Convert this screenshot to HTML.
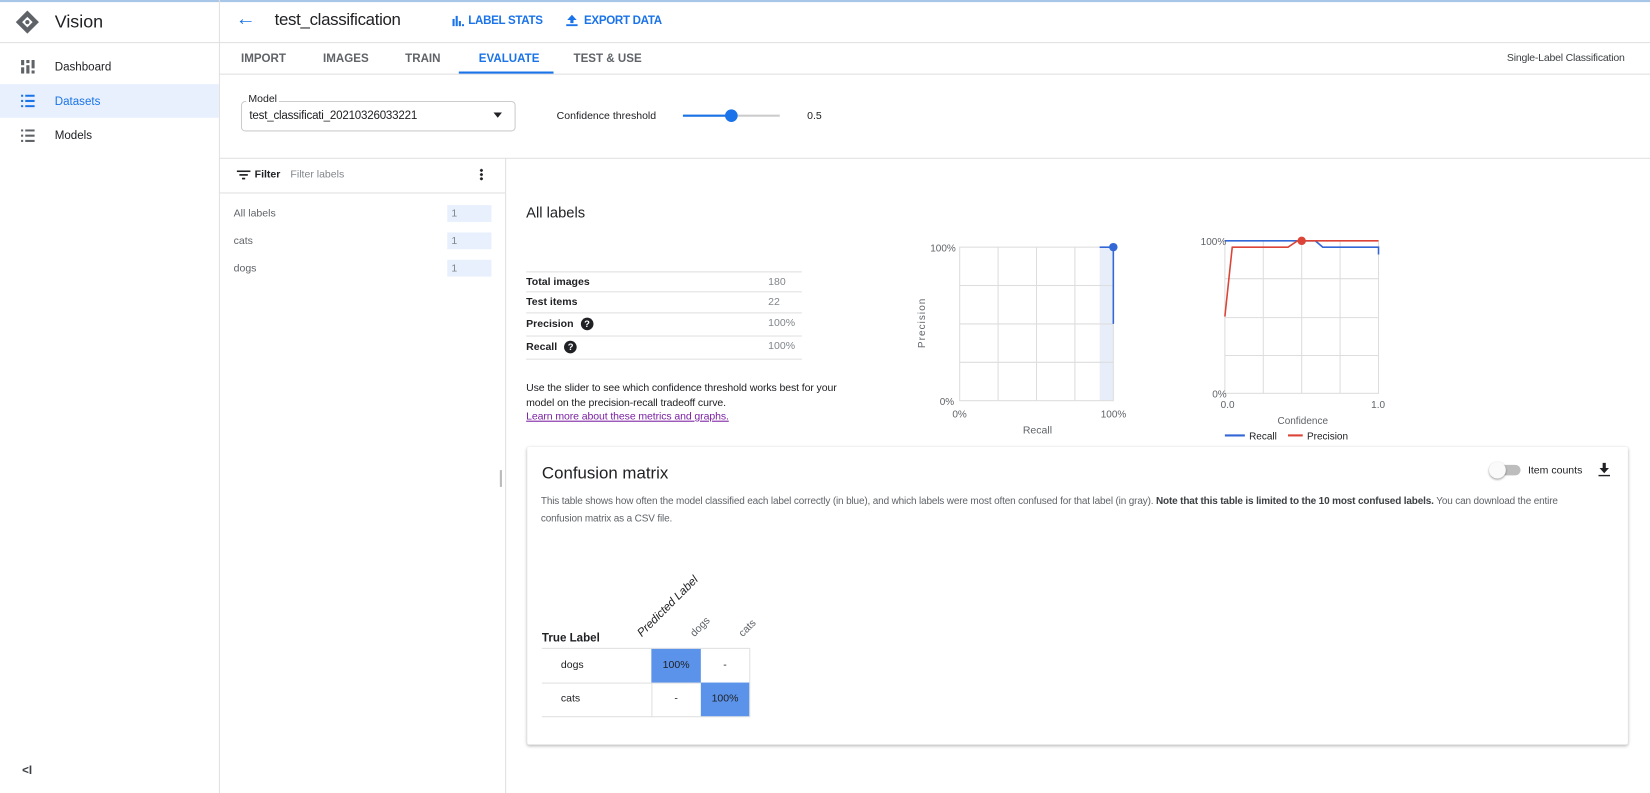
<!DOCTYPE html>
<html><head><meta charset="utf-8"><style>
*{box-sizing:border-box;margin:0;padding:0}
body{width:1650px;height:793px;overflow:hidden;background:#fff;font-family:"Liberation Sans",sans-serif;color:#202124}
#w{position:absolute;left:0;top:0;width:1568px;height:754px;transform:scale(1.05230,1.0517);transform-origin:0 0}
.a{position:absolute;white-space:nowrap}
.t{font-size:11px}
.line{position:absolute;background:#e0e0e0}
</style></head><body><div id="w">
<div class="a" style="left:0;top:0;width:1568px;height:2px;background:#a8c7e8"></div>
<div class="line" style="left:208px;top:0;width:1px;height:754px"></div>
<div class="line" style="left:0;top:40px;width:1568px;height:1px"></div>
<svg class="a" style="left:14px;top:9px" width="24" height="24" viewBox="0 0 24 24"><path d="M12 1L23 12 12 23 1 12Z" fill="#5f6368"/><path d="M12 7L17 12 12 17 7 12Z" fill="#fff"/><circle cx="12" cy="12" r="2" fill="#5f6368"/></svg>
<div class="a" style="left:52px;top:11px;font-size:17px">Vision</div>
<div class="a" style="left:0;top:80px;width:208px;height:32px;background:#e8f0fe"></div>
<svg class="a" style="left:20px;top:57px" width="13" height="13"><g fill="#5f6368"><rect x="0" y="0" width="3" height="5"/><rect x="0" y="7" width="3" height="6"/><rect x="5" y="0" width="3" height="3"/><rect x="5" y="5" width="3" height="8"/><rect x="10" y="0" width="3" height="8"/><rect x="10" y="10" width="3" height="3"/></g></svg>
<div class="a t" style="left:52px;top:58px">Dashboard</div>
<svg class="a" style="left:20px;top:90px" width="13" height="12"><g fill="#1a73e8"><rect x="0" y="0" width="2" height="2"/><rect x="0" y="5" width="2" height="2"/><rect x="0" y="10" width="2" height="2"/><rect x="4" y="0" width="9" height="2"/><rect x="4" y="5" width="9" height="2"/><rect x="4" y="10" width="9" height="2"/></g></svg>
<div class="a t" style="left:52px;top:91px;color:#1a73e8">Datasets</div>
<svg class="a" style="left:20px;top:123px" width="13" height="12"><g fill="#5f6368"><rect x="0" y="0" width="2" height="2"/><rect x="0" y="5" width="2" height="2"/><rect x="0" y="10" width="2" height="2"/><rect x="4" y="0" width="9" height="2"/><rect x="4" y="5" width="9" height="2"/><rect x="4" y="10" width="9" height="2"/></g></svg>
<div class="a t" style="left:52px;top:123px">Models</div>
<div class="a" style="left:21px;top:727px;font-size:11px;font-weight:bold;color:#3c4043">&lt;I</div>
<div class="a" style="left:224px;top:8px;font-size:19px;color:#1a73e8">←</div>
<div class="a" style="left:261px;top:11px;font-size:16px;letter-spacing:-0.3px">test_classification</div>
<svg class="a" style="left:430px;top:15px" width="11" height="10"><g fill="#1a73e8"><rect x="0" y="3" width="2" height="7"/><rect x="3" y="0" width="2" height="10"/><rect x="6" y="5" width="2" height="5"/><rect x="9" y="8" width="2" height="2"/></g></svg>
<div class="a" style="left:445px;top:14px;font-size:11px;font-weight:bold;color:#1a73e8;letter-spacing:-0.3px">LABEL STATS</div>
<svg class="a" style="left:538px;top:14px" width="11" height="11"><path d="M5.5 0L10 5H7V8H4V5H1Z M0 9H11V11H0Z" fill="#1a73e8"/></svg>
<div class="a" style="left:555px;top:14px;font-size:11px;font-weight:bold;color:#1a73e8;letter-spacing:-0.3px">EXPORT DATA</div>
<div class="line" style="left:208px;top:70px;width:1360px;height:1px"></div>
<div class="a" style="left:229px;top:50px;font-size:11px;font-weight:bold;color:#5f6368">IMPORT</div>
<div class="a" style="left:307px;top:50px;font-size:11px;font-weight:bold;color:#5f6368">IMAGES</div>
<div class="a" style="left:385px;top:50px;font-size:11px;font-weight:bold;color:#5f6368">TRAIN</div>
<div class="a" style="left:455px;top:50px;font-size:11px;font-weight:bold;color:#1a73e8">EVALUATE</div>
<div class="a" style="left:436px;top:68px;width:90px;height:2px;background:#1a73e8"></div>
<div class="a" style="left:545px;top:50px;font-size:11px;font-weight:bold;color:#5f6368">TEST &amp; USE</div>
<div class="a" style="left:1432px;top:50px;font-size:10px;color:#3c4043;letter-spacing:-0.2px">Single-Label Classification</div>
<div class="a" style="left:229px;top:96px;width:261px;height:29px;border:1px solid #ccc;border-radius:4px"></div>
<div class="a" style="left:234px;top:89px;font-size:10px;background:#fff;padding:0 2px">Model</div>
<div class="a" style="left:237px;top:104px;font-size:11px;letter-spacing:-0.2px">test_classificati_20210326033221</div>
<div class="a" style="left:469px;top:107px;width:0;height:0;border-left:4px solid transparent;border-right:4px solid transparent;border-top:5px solid #202124"></div>
<div class="a" style="left:529px;top:105px;font-size:10px">Confidence threshold</div>
<div class="a" style="left:649px;top:109px;width:92px;height:2px;background:#ccc"></div>
<div class="a" style="left:649px;top:109px;width:46px;height:2px;background:#1a73e8"></div>
<div class="a" style="left:689px;top:104px;width:12px;height:12px;border-radius:50%;background:#1a73e8"></div>
<div class="a" style="left:767px;top:105px;font-size:10px">0.5</div>
<div class="line" style="left:208px;top:150px;width:1360px;height:1px"></div>
<div class="line" style="left:480px;top:150px;width:1px;height:604px"></div>
<div class="line" style="left:208px;top:183px;width:272px;height:1px"></div>
<svg class="a" style="left:225px;top:162px" width="13" height="9"><g fill="#202124"><rect x="0" y="0" width="13" height="1.6"/><rect x="2.5" y="3.5" width="8" height="1.6"/><rect x="5" y="7" width="3" height="1.6"/></g></svg>
<div class="a" style="left:242px;top:161px;font-size:10px;font-weight:bold">Filter</div>
<div class="a" style="left:276px;top:161px;font-size:10px;color:#80868b">Filter labels</div>
<div class="a" style="left:456px;top:160px;width:3px;height:12px;background:radial-gradient(circle,#202124 1.3px,transparent 1.5px) 0 0/3px 4px"></div>
<div class="a" style="left:222px;top:198px;font-size:10px;color:#5f6368">All labels</div>
<div class="a" style="left:222px;top:224px;font-size:10px;color:#5f6368">cats</div>
<div class="a" style="left:222px;top:250px;font-size:10px;color:#5f6368">dogs</div>
<div class="a" style="left:425px;top:195px;width:42px;height:16px;background:#e8f0fe;font-size:10px;color:#80868b;padding:3px 4px">1</div>
<div class="a" style="left:425px;top:221px;width:42px;height:16px;background:#e8f0fe;font-size:10px;color:#80868b;padding:3px 4px">1</div>
<div class="a" style="left:425px;top:247px;width:42px;height:16px;background:#e8f0fe;font-size:10px;color:#80868b;padding:3px 4px">1</div>
<div class="a" style="left:475px;top:447px;width:2px;height:16px;background:#bbb"></div>
<div class="a" style="left:500px;top:194px;font-size:14px;font-weight:500">All labels</div>
<div class="line" style="left:500px;top:258px;width:262px;height:1px"></div>
<div class="line" style="left:500px;top:277px;width:262px;height:1px"></div>
<div class="line" style="left:500px;top:297px;width:262px;height:1px"></div>
<div class="line" style="left:500px;top:319px;width:262px;height:1px"></div>
<div class="line" style="left:500px;top:341px;width:262px;height:1px"></div>
<div class="a" style="left:500px;top:263px;font-size:10px;font-weight:bold">Total images</div><div class="a" style="left:730px;top:263px;font-size:10px;color:#80868b">180</div>
<div class="a" style="left:500px;top:282px;font-size:10px;font-weight:bold">Test items</div><div class="a" style="left:730px;top:282px;font-size:10px;color:#80868b">22</div>
<div class="a" style="left:500px;top:302px;font-size:10px;font-weight:bold">Precision <span style="display:inline-block;width:12px;height:12px;border-radius:50%;background:#202124;color:#fff;font-size:9px;text-align:center;line-height:12px;margin-left:4px">?</span></div><div class="a" style="left:730px;top:302px;font-size:10px;color:#80868b">100%</div>
<div class="a" style="left:500px;top:324px;font-size:10px;font-weight:bold">Recall <span style="display:inline-block;width:12px;height:12px;border-radius:50%;background:#202124;color:#fff;font-size:9px;text-align:center;line-height:12px;margin-left:4px">?</span></div><div class="a" style="left:730px;top:324px;font-size:10px;color:#80868b">100%</div>
<div class="a" style="left:500px;top:363px;font-size:10px;line-height:13.5px;white-space:normal;width:310px;letter-spacing:-0.1px">Use the slider to see which confidence threshold works best for your model on the precision-recall tradeoff curve.<br><span style="color:#7b1fa2;text-decoration:underline">Learn more about these metrics and graphs.</span></div>
<svg class="a" style="left:860px;top:225px" width="220" height="195">
<rect x="185" y="10" width="13" height="146" fill="#e8eef9"/>
<g stroke="#ddd" fill="none"><rect x="52" y="10" width="146" height="146"/><line x1="88.5" y1="10" x2="88.5" y2="156"/><line x1="125" y1="10" x2="125" y2="156"/><line x1="161.5" y1="10" x2="161.5" y2="156"/><line x1="52" y1="46.5" x2="198" y2="46.5"/><line x1="52" y1="83" x2="198" y2="83"/><line x1="52" y1="119.5" x2="198" y2="119.5"/></g>
<path d="M185 10H198V83" stroke="#3367d6" stroke-width="1.5" fill="none"/><circle cx="198" cy="10" r="4" fill="#3367d6"/>
<g font-size="9.5" fill="#5f6368" font-family="Liberation Sans"><text x="24" y="14">100%</text><text x="33" y="160">0%</text><text x="45" y="172">0%</text><text x="186" y="172">100%</text><text x="112" y="187" font-size="10">Recall</text><text transform="translate(19,106) rotate(-90)" letter-spacing="1">Precision</text></g>
</svg>
<svg class="a" style="left:1120px;top:215px" width="220" height="210">
<g stroke="#ddd" fill="none"><rect x="44" y="14" width="146" height="145"/><line x1="80.5" y1="14" x2="80.5" y2="159"/><line x1="117" y1="14" x2="117" y2="159"/><line x1="153.5" y1="14" x2="153.5" y2="159"/><line x1="44" y1="50" x2="190" y2="50"/><line x1="44" y1="87" x2="190" y2="87"/><line x1="44" y1="123" x2="190" y2="123"/></g>
<path d="M44 14H130L137 20H190V27" stroke="#3367d6" stroke-width="1.5" fill="none"/>
<path d="M44 86L51 20H104L113 14H190" stroke="#db4437" stroke-width="1.5" fill="none"/>
<circle cx="117" cy="14" r="4" fill="#db4437"/>
<g font-size="9.5" fill="#5f6368" font-family="Liberation Sans"><text x="21" y="18">100%</text><text x="32" y="163">0%</text><text x="40" y="173">0.0</text><text x="183" y="173">1.0</text><text x="94" y="188">Confidence</text><text x="67" y="203" fill="#202124">Recall</text><text x="122" y="203" fill="#202124">Precision</text></g>
<line x1="44" y1="199" x2="63" y2="199" stroke="#3367d6" stroke-width="2"/><line x1="104" y1="199" x2="118" y2="199" stroke="#db4437" stroke-width="2"/>
</svg>
<div class="a" style="left:501px;top:425px;width:1046px;height:283px;background:#fff;box-shadow:0 1px 3px rgba(0,0,0,.3);border-radius:2px"></div>
<div class="a" style="left:515px;top:442px;font-size:16px;font-weight:500">Confusion matrix</div>
<div class="a" style="left:1417px;top:442px;width:28px;height:10px;border-radius:5px;background:#bdbdbd"></div>
<div class="a" style="left:1415px;top:439px;width:16px;height:16px;border-radius:50%;background:#fafafa;box-shadow:0 1px 2px rgba(0,0,0,.4)"></div>
<div class="a" style="left:1452px;top:442px;font-size:10px">Item counts</div>
<svg class="a" style="left:1519px;top:440px" width="11" height="13"><path d="M4 0H7V5H10L5.5 10 1 5H4Z M0 11.5H11V13H0Z" fill="#202124"/></svg>
<div class="a" style="left:514px;top:468px;font-size:9.5px;line-height:17px;color:#5f6368;white-space:normal;width:998px;letter-spacing:-0.15px">This table shows how often the model classified each label correctly (in blue), and which labels were most often confused for that label (in gray). <b style="color:#3c4043">Note that this table is limited to the 10 most confused labels.</b> You can download the entire confusion matrix as a CSV file.</div>
<div class="a" style="left:515px;top:601px;font-size:11px;font-weight:bold">True Label</div>
<div class="a" style="left:612px;top:608px;font-size:11px;transform:rotate(-45deg);transform-origin:0 100%;font-style:italic;line-height:12px;margin-top:-12px">Predicted Label</div>
<div class="a" style="left:662px;top:608px;font-size:10px;color:#5f6368;transform:rotate(-45deg);transform-origin:0 100%;line-height:11px;margin-top:-11px">dogs</div>
<div class="a" style="left:708px;top:608px;font-size:10px;color:#5f6368;transform:rotate(-45deg);transform-origin:0 100%;line-height:11px;margin-top:-11px">cats</div>
<div class="line" style="left:515px;top:616px;width:197px;height:1px"></div>
<div class="line" style="left:515px;top:649px;width:197px;height:1px"></div>
<div class="line" style="left:515px;top:681px;width:197px;height:1px"></div>
<div class="line" style="left:619px;top:616px;width:1px;height:66px"></div>
<div class="line" style="left:712px;top:616px;width:1px;height:66px"></div>
<div class="a" style="left:619px;top:617px;width:47px;height:32px;background:#5b93ea;font-size:10px;text-align:center;line-height:32px">100%</div>
<div class="a" style="left:666px;top:617px;width:46px;height:32px;font-size:10px;text-align:center;line-height:32px">-</div>
<div class="a" style="left:619px;top:649px;width:47px;height:32px;font-size:10px;text-align:center;line-height:32px">-</div>
<div class="a" style="left:666px;top:649px;width:46px;height:32px;background:#5b93ea;font-size:10px;text-align:center;line-height:32px">100%</div>
<div class="a" style="left:533px;top:627px;font-size:10px">dogs</div>
<div class="a" style="left:533px;top:659px;font-size:10px">cats</div>
</div></body></html>
